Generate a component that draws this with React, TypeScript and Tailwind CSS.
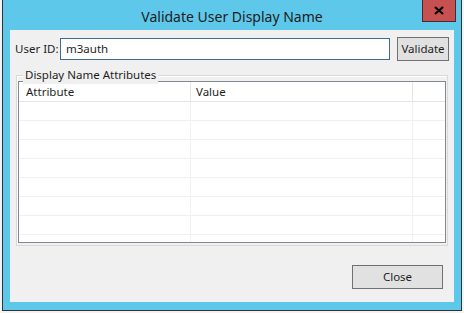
import React from 'react';

const font = { fontFamily: '"Noto Sans", "Open Sans", sans-serif' };

const rows = Array.from({ length: 7 });

const ListRow: React.FC<{ header?: boolean; a?: string; b?: string }> = ({ header, a, b }) => (
  <div
    className={
      header
        ? 'flex h-[20px] border-b border-[#e5e5e5] text-[#1e1e1e]'
        : 'flex h-[19px] border-b border-[#f0f0f0]'
    }
  >
    <div className={`w-[172px] border-r ${header ? 'border-[#e5e5e5]' : 'border-[#f0f0f0]'} pl-[7px] leading-[19px]`}>{a}</div>
    <div className={`w-[222px] border-r ${header ? 'border-[#e5e5e5]' : 'border-[#f0f0f0]'} pl-[5px] leading-[19px]`}>{b}</div>
    <div className="flex-1" />
  </div>
);

const App: React.FC = () => {
  return (
    <div className="w-[464px] h-[313px] bg-[#f3f3f3] overflow-hidden" style={font}>
      <div className="ml-[2px] w-[460px] h-[311px] border border-t-0 border-[#2e3436] bg-[#5ec8eb] flex flex-col">
        {/* title bar */}
        <div className="relative h-[30px] flex items-center justify-center">
          <span className="text-[14px] text-[#1c1c1c] pt-[2px] whitespace-nowrap">Validate User Display Name</span>
          <button className="absolute right-[5px] top-0 w-[34px] h-[22px] bg-[#c75050] border border-t-0 border-[#4a2a2a] flex items-center justify-center">
            <svg width="10" height="9" viewBox="0 0 10 9">
              <path d="M1 1 L9 8 M9 1 L1 8" stroke="#000" strokeWidth="2.2" />
            </svg>
          </button>
        </div>

        {/* client area */}
        <div className="ml-[7px] w-[444px] h-[272px] bg-[#f0f0f0] flex flex-col text-[11.5px] text-[#1e1e1e]">
          <div className="mt-[7px] h-[24px] flex items-center">
            <span className="pl-[5px] w-[50px] shrink-0 whitespace-nowrap">User ID:</span>
            <div className="w-[330px] shrink-0 h-[22px] bg-white border border-[#3f6a92] pl-[5px] leading-[20px]">m3auth</div>
            <button className="ml-[7px] shrink-0 w-[52px] h-[24px] bg-[#e1e1e1] border border-[#707070] leading-[22px]">Validate</button>
          </div>

          <div className="relative ml-[6px] mt-[14px] w-[432px] h-[171px] border border-[#d9d9d9] shadow-[inset_1px_1px_0_#fff] px-[1px] pt-[5px] pb-[2px]">
            <span className="absolute left-[6px] -top-[10px] px-[2px] bg-[#f0f0f0] leading-[18px] whitespace-nowrap">Display Name Attributes</span>
            <div className="h-[162px] bg-white border border-[#828790] flex flex-col">
              <ListRow header a="Attribute" b="Value" />
              {rows.map((_, i) => (
                <ListRow key={i} />
              ))}
              <div className="flex flex-1">
                <div className="w-[172px] border-r border-[#f0f0f0]" />
                <div className="w-[222px] border-r border-[#f0f0f0]" />
              </div>
            </div>
          </div>

          <button className="ml-[342px] mt-[19px] w-[91px] h-[24px] bg-[#e1e1e1] border border-[#707070]">Close</button>
        </div>
      </div>
    </div>
  );
};

export default App;
